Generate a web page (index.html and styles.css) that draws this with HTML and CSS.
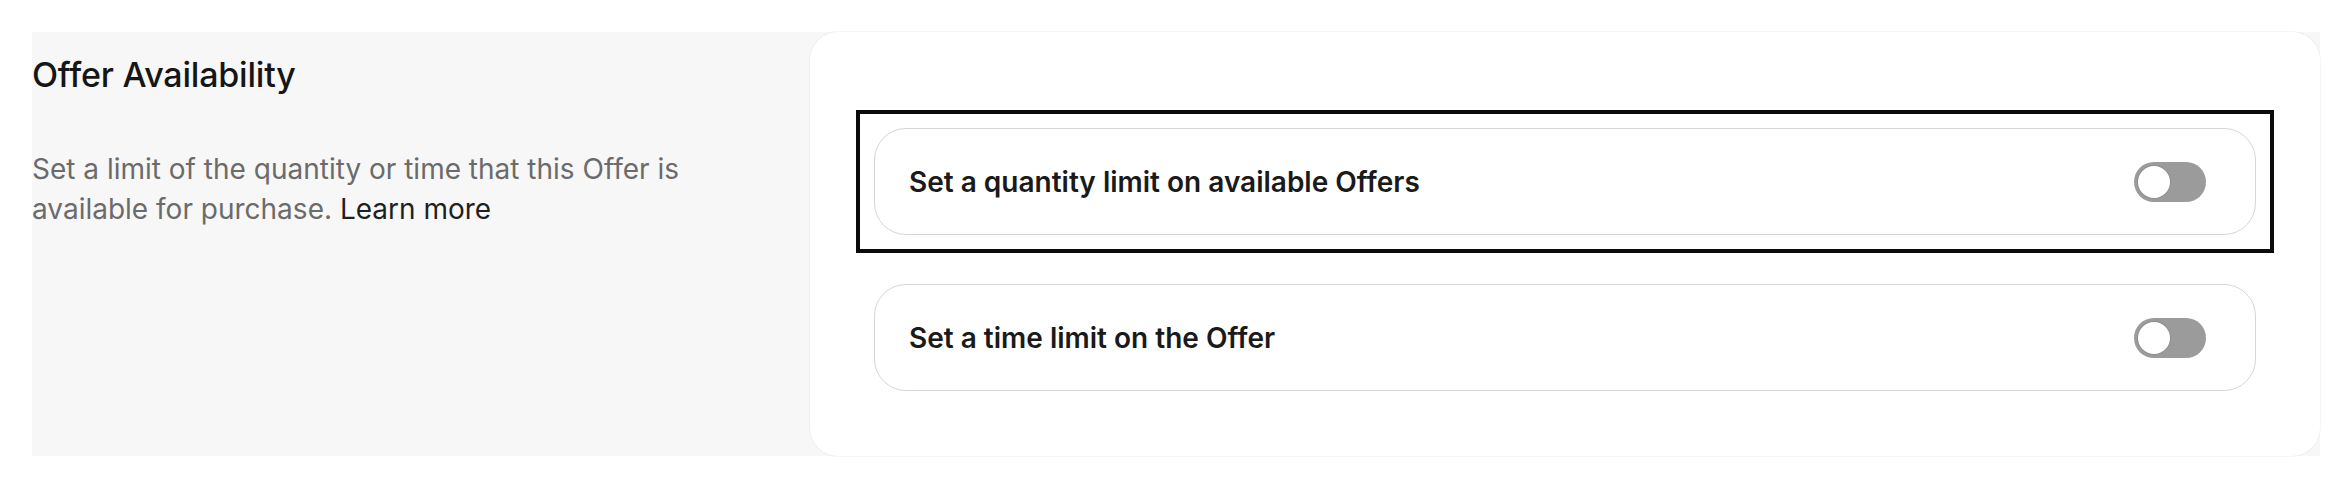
FILE: index.html
```html
<!DOCTYPE html>
<html lang="en">
<head>
    <meta charset="UTF-8">
    <meta name="viewport" content="width=device-width, initial-scale=1.0">
    <title>Offer Availability</title>
    <link rel="stylesheet" href="styles.css">
</head>
<body>
    <section class="settings-section">
        <div class="section-intro">
            <h2>Offer Availability</h2>
            <p>Set a limit of the quantity or time that this Offer is available for purchase. <a href="#" class="learn-more">Learn more</a></p>
        </div>
        <div class="settings-card">
            <label class="setting-row is-focused">
                <span class="setting-label">Set a quantity limit on available Offers</span>
                <input type="checkbox" class="switch-input">
                <span class="switch"><span class="switch-knob"></span></span>
            </label>
            <label class="setting-row">
                <span class="setting-label">Set a time limit on the Offer</span>
                <input type="checkbox" class="switch-input">
                <span class="switch"><span class="switch-knob"></span></span>
            </label>
        </div>
    </section>
</body>
</html>
```

FILE: styles.css
```css
* {
    margin: 0;
    padding: 0;
    box-sizing: border-box;
}

body {
    font-family: 'Inter', 'Liberation Sans', sans-serif;
    background-color: #ffffff;
    color: #1a1a1a;
    padding: 32px;
}

.settings-section {
    display: grid;
    grid-template-columns: 778px 1fr;
    background-color: #f7f7f7;
    height: 424px;
}

.section-intro {
    padding-top: 23px;
}

.section-intro h2 {
    font-size: 34px;
    font-weight: 500;
    line-height: 40px;
    letter-spacing: -0.2px;
    color: #161616;
}

.section-intro p {
    max-width: 700px;
    margin-top: 54px;
    font-size: 28px;
    line-height: 40px;
    color: #6b6b6b;
}

.learn-more {
    color: #1f1f1f;
    text-decoration: none;
}

.settings-card {
    background-color: #ffffff;
    border-radius: 28px;
    box-shadow: 0 0 0 1px rgba(0, 0, 0, 0.035);
    padding: 96px 64px 64px;
    display: flex;
    flex-direction: column;
    gap: 49px;
}

.setting-row {
    position: relative;
    display: flex;
    align-items: center;
    justify-content: space-between;
    height: 107px;
    padding: 0 49px 0 34px;
    border: 1px solid #d6d6d6;
    border-radius: 32px;
    cursor: pointer;
}

.setting-row.is-focused::after {
    content: '';
    position: absolute;
    inset: -19px;
    border: 4px solid #0b0b0b;
    pointer-events: none;
}

.setting-label {
    font-size: 28px;
    font-weight: 600;
    color: #1a1a1a;
}

.switch-input {
    display: none;
}

.switch {
    display: flex;
    align-items: center;
    width: 72px;
    height: 40px;
    padding: 0 4px;
    border-radius: 20px;
    background-color: #9b9b9b;
}

.switch-knob {
    width: 32px;
    height: 32px;
    border-radius: 50%;
    background-color: #ffffff;
    box-shadow: 0 0 0 1px rgba(0, 0, 0, 0.08);
}
```
